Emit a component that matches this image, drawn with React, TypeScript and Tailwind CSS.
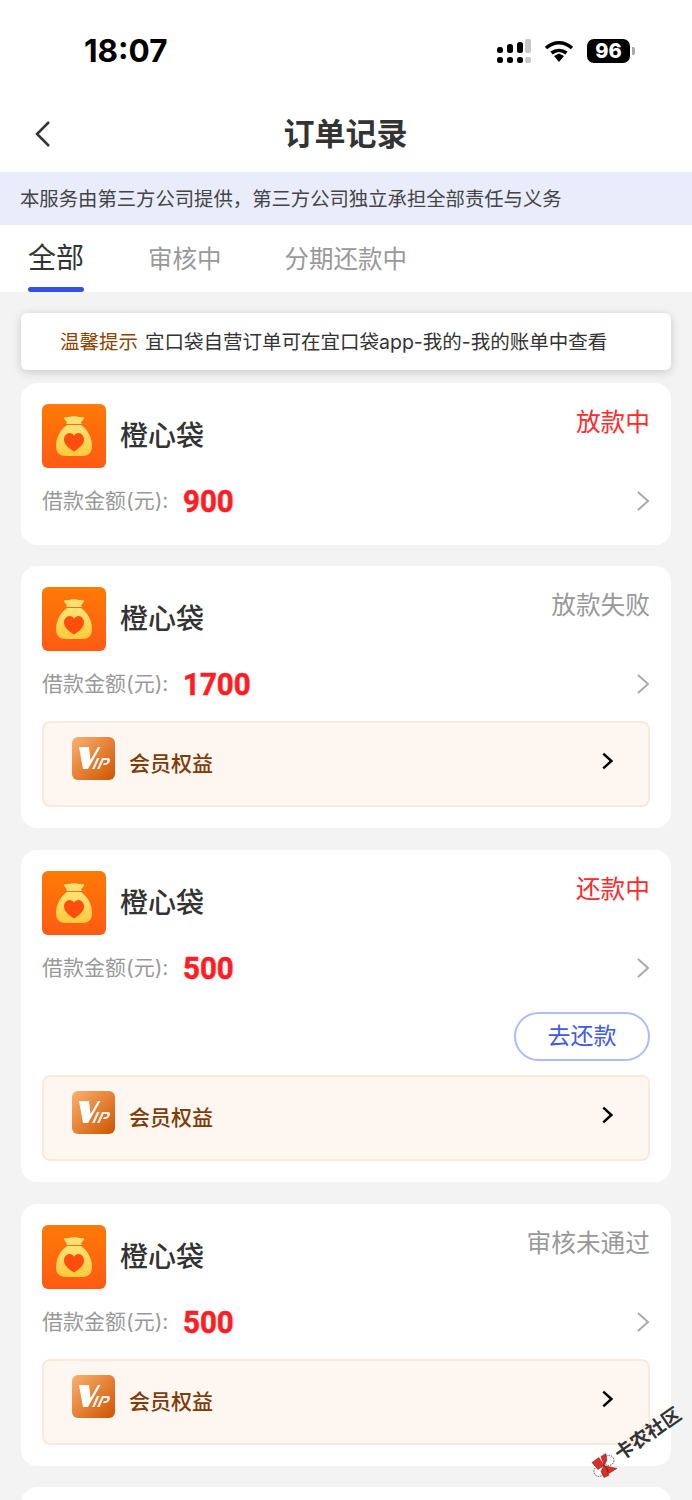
import React from "react";

const cjk = "font-['Inter','Noto_Sans_CJK_SC',sans-serif]";

const BagIcon = () => (
  <svg width="64" height="64" viewBox="0 0 64 64" className="shrink-0 rounded-[6px]">
    <defs>
      <linearGradient id="bagBg" x1="0" y1="0" x2="0" y2="1">
        <stop offset="0" stopColor="#ff7a05" />
        <stop offset="1" stopColor="#ff5a14" />
      </linearGradient>
      <linearGradient id="bagBody" x1="0" y1="0" x2="0" y2="1">
        <stop offset="0" stopColor="#ffe377" />
        <stop offset="1" stopColor="#ffc93a" />
      </linearGradient>
    </defs>
    <rect width="64" height="64" fill="url(#bagBg)" />
    <path d="M23 13c3 1 5-1 9-1s6 2 9 1c1 0 1 1 1 1.500l-3 4c1 .5 1 1.500 0 1.500H25c-1 0-1-1 0-1.500l-3-4c0-.5 0-1.500 1-1.500z" fill="#ffdf72" />
    <path d="M25 21h14c6 4 11 12 11 21 0 7-4 10-10 10H24c-6 0-10-3-10-10 0-9 5-17 11-21z" fill="url(#bagBody)" />
    <path d="M32 47.500c-5.500-3.500-10-7-10-12 0-3.500 2.500-6.500 5.500-6.500 2 0 3.500 1 4.500 2.800 1-1.800 2.500-2.800 4.500-2.800 3 0 5.500 3 5.500 6.500 0 5-4.500 8.500-10 12z" fill="#ff4d0d" />
  </svg>
);

const VipIcon = () => (
  <svg width="43" height="43" viewBox="0 0 43 43" className="shrink-0 rounded-[6px]">
    <defs>
      <linearGradient id="vipBg" x1="0" y1="0" x2="1" y2="1">
        <stop offset="0" stopColor="#fbb06e" />
        <stop offset="1" stopColor="#cf5400" />
      </linearGradient>
    </defs>
    <rect width="43" height="43" fill="url(#vipBg)" />
    <path d="M7 10h10l1.500 13 7.500-13h2.500L16 32h-5z" fill="#fff" />
    <path d="M20 32l5-11h2.500l-5 11zM25 32l5-11h2.500l-5 11z" fill="#fff" opacity="0.9" />
    <path d="M31 21h5c2 0 2.500 2 1.500 4-1 2-2.500 3-5 3h-1.500l1-2h1c1 0 2-.5 2.300-1.500.2-.8-.3-1.500-1.300-1.500H30z" fill="#fff" opacity="0.9" />
  </svg>
);

const Chevron = ({ color, width, w, h }: { color: string; width: number; w: number; h: number }) => (
  <svg width={w} height={h} viewBox="0 0 16 22" fill="none" stroke={color} strokeWidth={width}>
    <path d="M4 2l10 9-10 9" />
  </svg>
);

const VipRow = () => (
  <div className="mt-[18px] flex h-[86px] items-center justify-between rounded-[8px] border-2 border-[#fde8dc] bg-[#fdf6f1] pl-[28px] pr-[35px]">
    <div className="flex items-center gap-[14px]">
      <div className="-mt-[11px]"><VipIcon /></div>
      <span className="-mt-[1px] text-[21px] font-medium text-[#7f3c07]">会员权益</span>
    </div>
    <div className="-mt-[7px]"><Chevron color="#000" width={3} w={13} h={18} /></div>
  </div>
);

const Order = ({
  status,
  statusColor,
  amount,
  vip,
  repay,
  className = "",
}: {
  status: string;
  statusColor: string;
  amount: string;
  vip?: boolean;
  repay?: boolean;
  className?: string;
}) => (
  <div className={`rounded-[16px] bg-white px-[21px] pt-[21px] ${vip ? "pb-[21px]" : "pb-[25px]"} ${className}`}>
    <div className="flex items-start justify-between">
      <div className="flex items-center gap-[14px]">
        <BagIcon />
        <span className="text-[28px] font-medium text-[#333]">橙心袋</span>
      </div>
      <span className="text-[24.700px] leading-[36px]" style={{ color: statusColor }}>{status}</span>
    </div>
    <div className="mt-[14px] flex h-[38px] items-center justify-between">
      <div className="flex items-center">
        <span className="w-[141px] text-[21px] text-[#999]">借款金额(元):</span>
        <span className="inline-block origin-left scale-x-[0.92] font-['Roboto',sans-serif] text-[32px] font-bold text-[#ff1d25] [-webkit-text-stroke:0.6px_#ff1d25]">{amount}</span>
      </div>
      <Chevron color="#aaa" width={2} w={16} h={22} />
    </div>
    {repay && (
      <div className="mt-[25px] flex justify-end">
        <div className="flex h-[49px] w-[136px] items-center justify-center rounded-full border-2 border-[#aebcf7] text-[23px] text-[#3f5be8]">去还款</div>
      </div>
    )}
    {vip && (repay ? <div className="-mt-[4px]"><VipRow /></div> : <VipRow />)}
  </div>
);

export default function App() {
  return (
    <div className={`relative h-[1500px] w-[692px] overflow-hidden bg-[#f3f3f3] ${cjk}`}>
      <div className="bg-white">
        <div className="flex h-[96px] items-center justify-between pl-[84px] pr-[57px] pt-[6px]">
          <span className="font-['Inter',sans-serif] text-[31.500px] font-bold text-black">18:07</span>
          <div className="flex items-center gap-[13px]">
            <svg width="34" height="25" viewBox="0 0 34 25">
              <g fill="#000">
                <rect x="0" y="8" width="6" height="6" rx="2.500" />
                <rect x="10" y="5" width="6" height="9" rx="2.500" />
                <rect x="20" y="3" width="6" height="11" rx="2.500" />
                <rect x="0" y="18" width="6" height="6" rx="2.500" />
                <rect x="10" y="18" width="6" height="6" rx="2.500" />
                <rect x="20" y="18" width="6" height="6" rx="2.500" />
              </g>
              <rect x="28" y="0" width="6" height="14" rx="2" fill="#c8c8c8" />
              <rect x="28" y="18" width="6" height="6" rx="2" fill="#c8c8c8" />
            </svg>
            <svg width="30" height="22" viewBox="0 0 30 22" fill="none" stroke="#000">
              <path d="M2 8c8-7 18-7 26 0" strokeWidth="3.500" />
              <path d="M7.500 13c4.500-3.500 10.500-3.500 15 0" strokeWidth="3.500" />
              <path d="M10 16l5-2.500 5 2.500-5 6z" fill="#000" stroke="none" />
            </svg>
            <div className="flex items-center">
              <div className="flex h-[24px] w-[43px] items-center justify-center rounded-[7px] bg-black font-['Inter',sans-serif] text-[20px] font-extrabold text-white">96</div>
              <div className="ml-[2px] h-[8px] w-[3px] rounded-r-[2px] bg-[#aaa]" />
            </div>
          </div>
        </div>
        <div className="relative flex h-[76px] items-center justify-center">
          <svg className="absolute left-[33px] top-[24px]" width="20" height="28" viewBox="0 0 20 28" fill="none" stroke="#333" strokeWidth="2.500">
            <path d="M16 2L4 14l12 12" />
          </svg>
          <span className="-ml-[1px] text-[31px] font-bold text-[#333]">订单记录</span>
        </div>
        <div className="flex h-[53px] items-center bg-[#e9ecfb] pl-[20px] pt-[3px] text-[19.350px] text-[#444]">
          本服务由第三方公司提供，第三方公司独立承担全部责任与义务
        </div>
        <div className="flex h-[67px]">
          <div className="relative ml-[28px] pt-[12px] text-[28px] leading-[42px] text-[#333]">
            全部
            <div className="absolute bottom-0 left-0 h-[5px] w-full rounded-[3px] bg-[#3350e6]" />
          </div>
          <div className="ml-[64px] pt-[13px] text-[24.500px] leading-[42px] text-[#999]">审核中</div>
          <div className="ml-[63px] pt-[13px] text-[24.500px] leading-[42px] text-[#999]">分期还款中</div>
        </div>
      </div>
      <div className="px-[21px] pt-[21px]">
        <div className="flex h-[57px] items-center rounded-[6px] bg-white pl-[39px] pt-[3px] text-[19.500px] shadow-[0_2px_10px_rgba(0,0,0,0.18)]">
          <span className="text-[#8a4400]">温馨提示</span>
          <span className="ml-[7px] text-[#333]">宜口袋自营订单可在宜口袋app-我的-我的账单中查看</span>
        </div>
        <div className="mt-[13px] flex flex-col gap-[21px]">
          <Order status="放款中" statusColor="#ff2a2a" amount="900" />
          <Order status="放款失败" statusColor="#999" amount="1700" vip className="mb-px" />
          <Order status="还款中" statusColor="#ff2a2a" amount="500" vip repay className="mb-px" />
          <Order status="审核未通过" statusColor="#999" amount="500" vip />
          <div className="h-[100px] rounded-[16px] bg-white" />
        </div>
      </div>
      <div className="absolute left-[583px] top-[1429px] flex -rotate-[35deg] items-center gap-[2px] whitespace-nowrap">
        <svg width="28" height="28" viewBox="0 0 28 28" className="shrink-0">
          <g transform="translate(14 14) rotate(35)">
            <circle cx="5" cy="-5" r="5" fill="#fff" stroke="#555" strokeDasharray="1.500 1" />
            <circle cx="-5" cy="6" r="5" fill="#fff" stroke="#555" strokeDasharray="1.500 1" />
            <path d="M0 0L-5-8-12-3-6 4zM0 0L-3-9 2-12 3-5zM0 0L13 3 5 8 2 2zM0 0L3 2 5 10 0 12-3 6z" fill="#e32b20" stroke="#222" strokeWidth="0.400" />
          </g>
        </svg>
        <span className="text-[19px] font-bold text-[#333]">卡农社区</span>
      </div>
    </div>
  );
}
